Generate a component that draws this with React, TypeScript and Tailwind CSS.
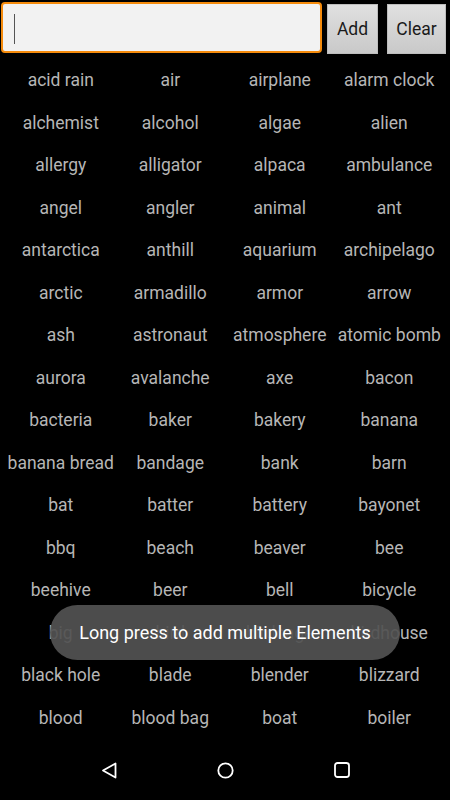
import React from 'react';

const words: string[] = [
    'acid rain', 'air', 'airplane', 'alarm clock',
    'alchemist', 'alcohol', 'algae', 'alien',
    'allergy', 'alligator', 'alpaca', 'ambulance',
    'angel', 'angler', 'animal', 'ant',
    'antarctica', 'anthill', 'aquarium', 'archipelago',
    'arctic', 'armadillo', 'armor', 'arrow',
    'ash', 'astronaut', 'atmosphere', 'atomic bomb',
    'aurora', 'avalanche', 'axe', 'bacon',
    'bacteria', 'baker', 'bakery', 'banana',
    'banana bread', 'bandage', 'bank', 'barn',
    'bat', 'batter', 'battery', 'bayonet',
    'bbq', 'beach', 'beaver', 'bee',
    'beehive', 'beer', 'bell', 'bicycle',
    'big', 'bird', 'birdcage', 'birdhouse',
    'black hole', 'blade', 'blender', 'blizzard',
    'blood', 'blood bag', 'boat', 'boiler',
];

const App: React.FC = () => {
    return (
        <div className="relative flex flex-col h-[800px] w-[450px] bg-black font-['Roboto',sans-serif] overflow-hidden">
            {/* top bar */}
            <div className="flex items-start h-[58px] pt-[2px] pl-[1px]">
                <div className="relative w-[321px] h-[51px] rounded-[4px] border-2 border-[#f58b0c] bg-[#f2f2f2]">
                    <div className="absolute left-[11px] top-[10px] w-[1px] h-[30px] bg-[#555]"></div>
                </div>
                <button className="ml-[5px] mt-[2px] w-[51px] h-[50px] border border-[#bdbdbd] bg-gradient-to-b from-[#e0e0e0] to-[#c9c9c9] text-[17.5px] text-[#1a1a1a]">
                    Add
                </button>
                <button className="ml-[9px] mt-[2px] w-[59px] h-[50px] border border-[#bdbdbd] bg-gradient-to-b from-[#e0e0e0] to-[#c9c9c9] text-[17.5px] text-[#1a1a1a]">
                    Clear
                </button>
            </div>

            {/* element grid */}
            <div className="flex-1 grid grid-cols-4 auto-rows-[42.5px] px-[6px] pt-[1px] content-start">
                {words.map((w, i) => (
                    <div key={i} className="flex items-center justify-center text-[17.5px] text-[#b6b6b6] whitespace-nowrap">
                        {w}
                    </div>
                ))}
            </div>

            {/* nav bar */}
            <div className="flex items-center justify-center h-[60px] gap-[100px]">
                <svg width="16" height="17" viewBox="0 0 16 17">
                    <path d="M14.5 1.5 L14.5 15.5 L2 8.5 Z" fill="none" stroke="#fff" strokeWidth="1.8" strokeLinejoin="round" />
                </svg>
                <svg width="17" height="17" viewBox="0 0 17 17">
                    <circle cx="8.5" cy="8.5" r="7.2" fill="none" stroke="#fff" strokeWidth="1.8" />
                </svg>
                <svg width="16" height="16" viewBox="0 0 16 16">
                    <rect x="1" y="1" width="14" height="14" rx="2.5" fill="none" stroke="#fff" strokeWidth="1.8" />
                </svg>
            </div>

            {/* toast */}
            <div className="absolute left-[50px] top-[605px] w-[350px] h-[55px] rounded-full bg-[rgba(82,82,82,0.93)] flex items-center justify-center">
                <span className="text-white text-[18px]">Long press to add multiple Elements</span>
            </div>
        </div>
    );
};

export default App;
